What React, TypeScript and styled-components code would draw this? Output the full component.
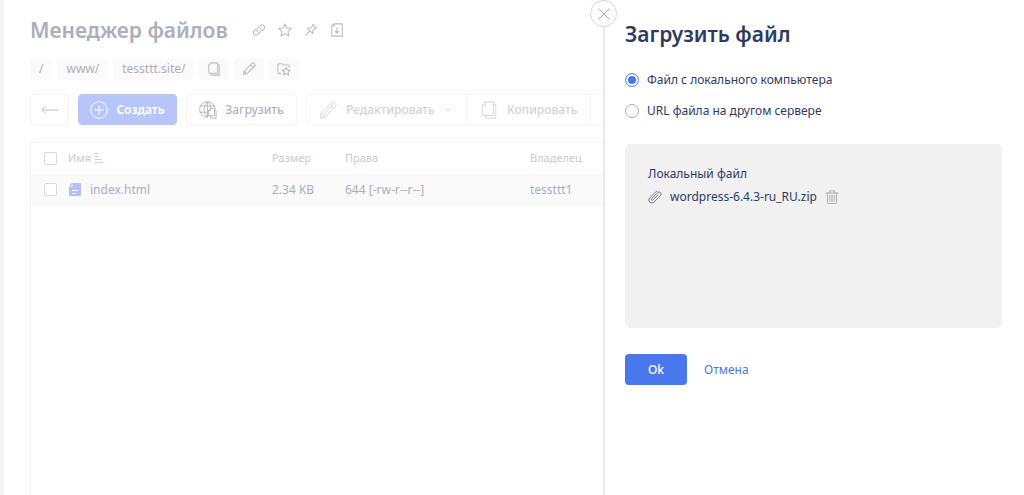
import React, { useState } from "react";
import styled, { createGlobalStyle } from "styled-components";

const GlobalStyle = createGlobalStyle`
  *, *::before, *::after { box-sizing: border-box; }
  body {
    margin: 0;
    background: #fff;
    color: #2e3a60;
    font: 400 13px/20px "Noto Sans", "Open Sans", sans-serif;
  }
  button, input { font: inherit; color: inherit; margin: 0; }
  button { cursor: pointer; }
  svg { display: block; flex: none; }
`;

const Page = styled.div`
  display: flex;
  min-height: 100vh;
  overflow: hidden;
`;

const Rail = styled.div`
  flex: 0 0 4px;
  background: #f4f4f5;
`;

const Manager = styled.main`
  flex: 1 1 0;
  min-width: 0;
  display: flex;
  flex-direction: column;
  padding: 16px 0 0 26px;
  overflow: hidden;
  color: #abaebc;
`;

const TitleRow = styled.header`
  display: flex;
  align-items: center;
  gap: 24px;
  height: 28px;
`;

const Title = styled.h1`
  margin: 0;
  font-size: 21px;
  line-height: 28px;
  font-weight: 600;
  white-space: nowrap;
`;

const TitleActions = styled.div`
  display: flex;
  gap: 12px;
`;

const IconButton = styled.button`
  display: flex;
  padding: 0;
  border: 0;
  background: none;
  color: #b9bbc3;
`;

const Crumbs = styled.nav`
  display: flex;
  gap: 5px;
  margin-top: 14px;
`;

const Crumb = styled.a`
  height: 22px;
  padding: 0 9px;
  border-radius: 4px;
  background: #fafafa;
  color: inherit;
  font-size: 12px;
  line-height: 22px;
  text-decoration: none;
`;

const CrumbButton = styled.button`
  display: flex;
  align-items: center;
  justify-content: center;
  width: 30px;
  height: 22px;
  padding: 0;
  border: 0;
  border-radius: 4px;
  background: #fafafa;
  color: #b9bbc3;
`;

const Toolbar = styled.div`
  display: flex;
  gap: 9px;
  margin-top: 14px;
`;

const ToolButton = styled.button<{ $primary?: boolean; $width: number }>`
  flex: 0 0 ${(p) => p.$width}px;
  display: flex;
  align-items: center;
  justify-content: center;
  gap: 8px;
  height: 31px;
  padding: 0;
  border: 1px solid ${(p) => (p.$primary ? "#b8c5f8" : "#f3f3f5")};
  border-radius: 4px;
  background: ${(p) => (p.$primary ? "#b8c5f8" : "#fff")};
  color: ${(p) => (p.$primary ? "#fff" : "#b1b3c0")};
  font-size: 12px;
  font-weight: ${(p) => (p.$primary ? 600 : 500)};
  white-space: nowrap;
`;

const ToolGroup = styled.div`
  flex: none;
  display: flex;
  height: 31px;
  border: 1px solid #f4f4f6;
  border-radius: 4px;
`;

const GroupButton = styled.button<{ $width: number }>`
  display: flex;
  align-items: center;
  gap: 9px;
  width: ${(p) => p.$width}px;
  padding: 0 12px;
  border: 0;
  border-right: 1px solid #f4f4f6;
  background: none;
  color: #d2d3d9;
  font-size: 12px;
  font-weight: 500;
  white-space: nowrap;
  &:last-child { border-right: 0; }
`;

const Listing = styled.div`
  flex: 1;
  margin-top: 17px;
  border: solid #f3f3f5;
  border-width: 1px 0 0 1px;
  border-top-left-radius: 4px;
`;

const Files = styled.table`
  width: 100%;
  border-collapse: collapse;
  table-layout: fixed;
  text-align: left;
`;

const HeadCell = styled.th<{ $width?: number }>`
  width: ${(p) => (p.$width ? `${p.$width}px` : "auto")};
  height: 31px;
  padding: 0;
  color: #c9cad0;
  font-size: 11px;
  font-weight: 400;
  white-space: nowrap;
`;

const FileRow = styled.tr`
  background: #fafafb;
`;

const Cell = styled.td`
  height: 31px;
  padding: 0;
  border: solid #f7f7f8;
  border-width: 1px 0;
  font-size: 12px;
  white-space: nowrap;
`;

const CheckCell = styled.div`
  display: flex;
  padding-left: 13px;
`;

const Checkbox = styled.input.attrs({ type: "checkbox" })`
  appearance: none;
  width: 13px;
  height: 13px;
  border: 1px solid #d8d8dd;
  border-radius: 2px;
  background: #fff;
  &:checked { background: #b8c5f8; }
`;

const Inline = styled.span<{ $gap: number }>`
  display: flex;
  align-items: center;
  gap: ${(p) => p.$gap}px;
`;

const Panel = styled.aside`
  position: relative;
  flex: 0 0 421px;
  max-width: 100%;
  padding: 20px 22px 20px 20px;
  border-left: 2px solid #e9e9eb;
  background: #fff;
`;

const Close = styled.button`
  position: absolute;
  top: 0;
  left: -15px;
  display: flex;
  align-items: center;
  justify-content: center;
  width: 27px;
  height: 27px;
  padding: 0;
  border: 1px solid #d6d6d9;
  border-radius: 50%;
  background: #fff;
  color: #a6a7ab;
`;

const PanelTitle = styled.h2`
  margin: 0;
  font-size: 21px;
  line-height: 28px;
  font-weight: 600;
`;

const Options = styled.fieldset`
  display: flex;
  flex-direction: column;
  gap: 11px;
  margin: 22px 0 0;
  padding: 0;
  border: 0;
`;

const Option = styled.label`
  display: flex;
  align-items: center;
  gap: 8px;
  font-size: 12px;
  cursor: pointer;
`;

const Radio = styled.input.attrs({ type: "radio" })`
  appearance: none;
  width: 14px;
  height: 14px;
  border: 1px solid #a9a9ad;
  border-radius: 50%;
  background: #fff;
  &:checked {
    border-color: #6f93ee;
    background: #4a77e8;
    box-shadow: inset 0 0 0 2px #fff;
  }
`;

const DropBox = styled.section`
  min-height: 184px;
  margin-top: 23px;
  padding: 20px 23px;
  border-radius: 5px;
  background: #f1f1f1;
  font-size: 12px;
`;

const DropLabel = styled.div`
  line-height: 20px;
`;

const FileLine = styled.div`
  display: flex;
  align-items: center;
  gap: 8px;
  margin-top: 3px;
`;

const Actions = styled.div`
  display: flex;
  align-items: center;
  gap: 17px;
  margin-top: 26px;
`;

const OkButton = styled.button`
  width: 62px;
  height: 31px;
  padding: 0;
  border: 0;
  border-radius: 4px;
  background: #4978ec;
  color: #fff;
  font-size: 12px;
  font-weight: 500;
`;

const Cancel = styled.a`
  color: #4978e4;
  font-size: 12px;
  text-decoration: none;
`;

type IconProps = {
  size?: number;
  width?: number;
  color?: string;
  children: React.ReactNode;
};

const Icon = ({ size = 14, width = 1, color = "currentColor", children }: IconProps) => (
  <svg
    width={size}
    height={size}
    viewBox="0 0 16 16"
    fill="none"
    stroke={color}
    strokeWidth={width}
    strokeLinecap="round"
    strokeLinejoin="round"
    aria-hidden="true"
  >
    {children}
  </svg>
);

const pencil = (
  <>
    <path d="M1 15l1.2-4.6L11.4 1.2a1.3 1.3 0 0 1 1.8 0l1.6 1.6a1.3 1.3 0 0 1 0 1.8L5.6 13.8z" />
    <path d="M2.2 10.4l3.4 3.4M10 2.6L13.4 6M4 12l7.6-7.6" />
  </>
);

const copy = (
  <>
    <path d="M5 .8h7v12H2V3.8zM5 .8v3H2" />
    <path d="M12 2.8h2v12.4H4.6v-2.4" />
  </>
);

export default function App() {
  const [source, setSource] = useState("local");

  return (
    <>
      <GlobalStyle />
      <Page>
        <Rail />
        <Manager>
          <TitleRow>
            <Title>Менеджер файлов</Title>
            <TitleActions>
              <IconButton aria-label="Ссылка">
                <Icon width={1.2}>
                  <path d="M6.8 10.2a2.8 2.8 0 0 1-.4-4.200l3-3a2.900 2.900 0 0 1 4.200 0 2.900 2.900 0 0 1 0 4.200l-1.600 1.600" />
                  <path d="M9.200 5.800a2.800 2.800 0 0 1 .4 4.200l-3 3a2.900 2.900 0 0 1-4.200 0 2.900 2.900 0 0 1 0-4.200L4 7.200" />
                </Icon>
              </IconButton>
              <IconButton aria-label="В избранное">
                <Icon width={1.2}>
                  <path d="M8 1l2.1 4.7 5.1.5-3.8 3.5 1.1 5.1L8 12.2l-4.5 2.6 1.1-5.1L.8 6.2l5.1-.5z" />
                </Icon>
              </IconButton>
              <IconButton aria-label="Закрепить">
                <Icon width={1.2}>
                  <path d="M10.200 1.600L14.400 5.800l-1.600.4-2.600 2.600-.2 3.400L3.800 6l3.400-.2 2.600-2.600zM6.600 9.400L1.800 14.200" />
                </Icon>
              </IconButton>
              <IconButton aria-label="Скачать">
                <Icon width={1.2}>
                  <path d="M4.500 1H14v14H2V3.500zM4.500 1v2.500H2M8 5.500v6M6 9.600L8 11.600l2-2" />
                </Icon>
              </IconButton>
            </TitleActions>
          </TitleRow>

          <Crumbs aria-label="Путь">
            <Crumb href="#root">/</Crumb>
            <Crumb href="#www">www/</Crumb>
            <Crumb href="#site">tessttt.site/</Crumb>
            <CrumbButton aria-label="Копировать путь">
              <Icon width={1.2}>
                <path d="M4.500 1H11a1.200 1.200 0 0 1 1.200 1.200v10.600H3.200A1.200 1.200 0 0 1 2 11.600V3.500z" />
                <path d="M12.200 3h.6A1.200 1.200 0 0 1 14 4.200V15H5.500A1.200 1.200 0 0 1 4.300 13.800v-1" />
              </Icon>
            </CrumbButton>
            <CrumbButton aria-label="Изменить путь">
              <Icon width={1.2}>
                <path d="M1.500 14.500l1-4L11.600 1.400a1.200 1.200 0 0 1 1.700 0l1.300 1.300a1.200 1.200 0 0 1 0 1.700L5.500 13.500zM2.500 10.500l3 3M10 3l3 3" />
              </Icon>
            </CrumbButton>
            <CrumbButton aria-label="Избранные папки">
              <Icon width={1.2}>
                <path d="M4.500 13H2a1 1 0 0 1-1-1V3a1 1 0 0 1 1-1h4l1.500 1.500H13a1 1 0 0 1 1 1V6" />
                <path d="M10.500 6l1.400 3 3.300.4-2.500 2.200.7 3.300-2.900-1.700-2.900 1.700.7-3.300-2.500-2.200L9.100 9z" />
              </Icon>
            </CrumbButton>
          </Crumbs>

          <Toolbar>
            <ToolButton $width={39} aria-label="Назад">
              <svg width="18" height="8" viewBox="0 0 18 8" fill="none" stroke="#bfc0c5" aria-hidden="true">
                <path d="M18 4H1M4.500.5L1 4l3.500 3.500" />
              </svg>
            </ToolButton>
            <ToolButton $primary $width={99}>
              <Icon size={18} width={0.8}>
                <circle cx="8" cy="8" r="7.4" />
                <path d="M8 4v8M4 8h8" />
              </Icon>
              Создать
            </ToolButton>
            <ToolButton $width={111}>
              <Icon size={18} width={0.8}>
                <path d="M7.500 14.500A7 7 0 1 1 14.500 7M7.500.6c-4 3.500-4 10.400 0 13.900M7.500.6c2 1.400 3 3 3.200 4.900M7.500.6v13.900M1.500 4.500h12M1 10h6.500" />
                <path d="M10.500 6.500h3.200v6.500H8.500V8.500zM10.500 6.500v2h-2M13.700 8.500H15.200v6.700h-5V13" />
              </Icon>
              Загрузить
            </ToolButton>
            <ToolGroup>
              <GroupButton $width={161}>
                <Icon size={18} width={0.8}>{pencil}</Icon>
                Редактировать
                <svg width="8" height="5" viewBox="0 0 8 5" fill="none" stroke="currentColor" aria-hidden="true">
                  <path d="M1 1l3 3 3-3" />
                </svg>
              </GroupButton>
              <GroupButton $width={123}>
                <Icon size={18} width={0.8}>{copy}</Icon>
                Копировать
              </GroupButton>
              <GroupButton $width={42} aria-label="Вставить">
                <Icon size={18} width={0.8}>{copy}</Icon>
              </GroupButton>
            </ToolGroup>
          </Toolbar>

          <Listing>
            <Files>
              <thead>
                <tr>
                  <HeadCell $width={37}>
                    <CheckCell>
                      <Checkbox aria-label="Выбрать все" />
                    </CheckCell>
                  </HeadCell>
                  <HeadCell>
                    <Inline $gap={3}>
                      Имя
                      <svg width="9" height="10" viewBox="0 0 9 10" fill="none" stroke="#c6ccf0" aria-hidden="true">
                        <path d="M0 .5h4M1 3.500h4M1 6.500h6M0 9.500h9" />
                      </svg>
                    </Inline>
                  </HeadCell>
                  <HeadCell $width={73}>Размер</HeadCell>
                  <HeadCell $width={185}>Права</HeadCell>
                  <HeadCell $width={73}>Владелец</HeadCell>
                </tr>
              </thead>
              <tbody>
                <FileRow>
                  <Cell>
                    <CheckCell>
                      <Checkbox aria-label="Выбрать index.html" />
                    </CheckCell>
                  </Cell>
                  <Cell>
                    <Inline $gap={8}>
                      <svg width="14" height="14" viewBox="0 0 14 14" aria-hidden="true">
                        <path d="M4.500 0H12a1 1 0 0 1 1 1v12H1V3.500h2.500a1 1 0 0 0 1-1z" fill="#b4c0f4" />
                        <path d="M1 2.800L3.800 0v2.800z" fill="#b4c0f4" />
                        <path d="M4 7.500h6M4 10.500h4" stroke="#fff" />
                      </svg>
                      index.html
                    </Inline>
                  </Cell>
                  <Cell>2.34 KB</Cell>
                  <Cell>644 [-rw-r--r--]</Cell>
                  <Cell>tessttt1</Cell>
                </FileRow>
              </tbody>
            </Files>
          </Listing>
        </Manager>

        <Panel aria-labelledby="upload-title">
          <Close aria-label="Закрыть">
            <svg width="12" height="12" viewBox="0 0 12 12" stroke="currentColor" aria-hidden="true">
              <path d="M.5.5l11 11M11.500.5l-11 11" />
            </svg>
          </Close>
          <PanelTitle id="upload-title">Загрузить файл</PanelTitle>
          <Options aria-label="Источник файла">
            <Option>
              <Radio name="source" checked={source === "local"} onChange={() => setSource("local")} />
              Файл с локального компьютера
            </Option>
            <Option>
              <Radio name="source" checked={source === "url"} onChange={() => setSource("url")} />
              URL файла на другом сервере
            </Option>
          </Options>
          <DropBox>
            <DropLabel>Локальный файл</DropLabel>
            <FileLine>
              <Icon color="#5d6685">
                <path d="M11.500 5.500l-6 6a1 1 0 0 1-1.500-1.500l7-7a2.300 2.300 0 0 1 3.300 3.300l-7.600 7.600A3.400 3.400 0 0 1 1.800 9.200l7-7a2 2 0 0 1 1.500-.7" />
              </Icon>
              wordpress-6.4.3-ru_RU.zip
              <IconButton aria-label="Удалить файл">
                <Icon color="#a3a4aa">
                  <path d="M1.500 3.500h13M5.500 3.500V1h5v2.500M2.800 3.500v11a1 1 0 0 0 1 1h8.400a1 1 0 0 0 1-1v-11M5.500 6v7M8 6v7M10.500 6v7" />
                </Icon>
              </IconButton>
            </FileLine>
          </DropBox>
          <Actions>
            <OkButton>Ok</OkButton>
            <Cancel href="#cancel">Отмена</Cancel>
          </Actions>
        </Panel>
      </Page>
    </>
  );
}
